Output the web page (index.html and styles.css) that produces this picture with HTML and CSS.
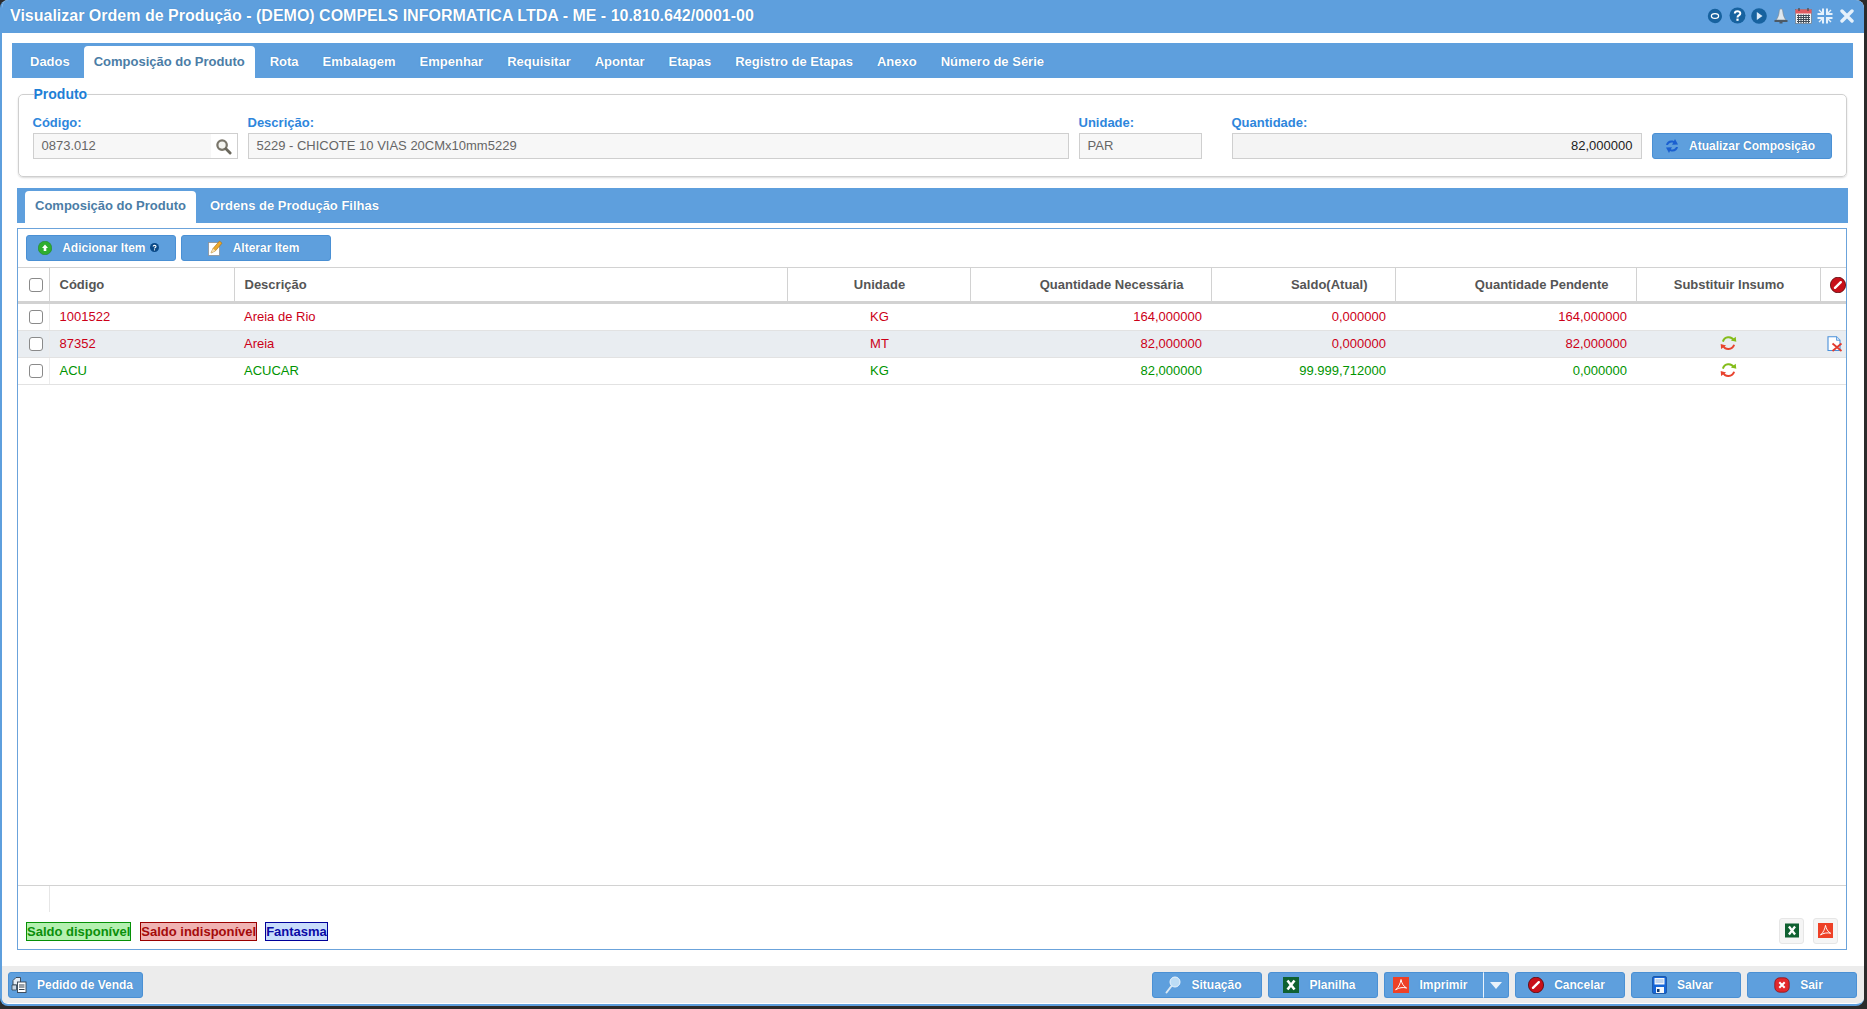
FILE: index.html
```html
<!DOCTYPE html>
<html lang="pt-BR">
<head>
<meta charset="utf-8">
<title>Visualizar Ordem de Produção</title>
<link rel="stylesheet" href="styles.css">
</head>
<body>
<svg class="defs" width="0" height="0" aria-hidden="true">
  <symbol id="i-excel" viewBox="0 0 16 16"><rect width="16" height="16" fill="#0f6131"/><path d="M4.5 3.5 11.5 12.5M11.5 3.5 4.5 12.5" stroke="#fff" stroke-width="2.6" fill="none"/></symbol>
  <symbol id="i-pdf" viewBox="0 0 16 16"><rect width="16" height="16" fill="#ee4127"/><path d="M8 2.5C7.4 6 6 10 2.6 12.8 6 10.6 10 10 13.6 11 10.5 9.5 8.6 6 8 2.5Z" fill="none" stroke="#fff" stroke-width="1"/></symbol>
  <symbol id="i-cancel" viewBox="0 0 16 16"><ellipse cx="8" cy="8" rx="7.6" ry="7.8" fill="#c8101a" stroke="#57060a" stroke-width=".8"/><path d="M5 10.8 10.8 5.2" stroke="#fff" stroke-width="2.4" stroke-linecap="round"/></symbol>
  <symbol id="i-swap" viewBox="0 0 16 16"><path d="M2.4 6.6A6 6 0 0 1 13.4 5.4" fill="none" stroke="#84bd1a" stroke-width="2"/><path d="M10.4 5.6 15.8 6.8 15.2 1.800Z" fill="#84bd1a"/><path d="M13.6 9.8A6 6 0 0 1 2.4 10.4" fill="none" stroke="#e8432e" stroke-width="2"/><path d="M.2 9 .6 14 5.6 10.6Z" fill="#e8432e"/></symbol>
</svg>
<div class="window">
  <header class="titlebar">
    <h1 class="title">Visualizar Ordem de Produção - (DEMO) COMPELS INFORMATICA LTDA - ME - 10.810.642/0001-00</h1>
    <div class="tools">
      <span class="tool"><svg width="16" height="16" viewBox="0 0 16 16"><path d="M8 .8A7.2 7.2 0 0 1 15 8C15 12 12 15.200 8 15.200A7.200 7.200 0 0 1 8 .8Z" fill="#17629f"/><ellipse cx="8" cy="8" rx="3.600" ry="2.400" fill="none" stroke="#fff" stroke-width="1.300"/></svg></span>
      <span class="tool"><svg width="17" height="17" viewBox="0 0 17 17"><circle cx="8.500" cy="8.500" r="8" fill="#17629f"/><path d="M5.800 6.600C5.800 3.500 11.300 3.500 11.300 6.500 11.300 8.500 8.500 8.400 8.500 10.400" fill="none" stroke="#fff" stroke-width="2"/><rect x="7.400" y="11.600" width="2.200" height="2.200" fill="#fff"/></svg></span>
      <span class="tool"><svg width="16" height="16" viewBox="0 0 16 16"><circle cx="8" cy="8" r="7.800" fill="#17629f"/><path d="M5.800 4 11.500 8 5.800 12Z" fill="#dcebf8"/></svg></span>
      <span class="tool"><svg width="14" height="16" viewBox="0 0 14 16"><path d="M7 .8C5.600.8 5.400 2 5.200 3.500 4.800 7 3.800 10 2 12H12C10.200 10 9.200 7 8.800 3.500 8.600 2 8.400.8 7 .8Z" fill="#dfe8ef" stroke="#7d8a94" stroke-width=".7"/><rect x=".5" y="12" width="13" height="2" fill="#4d5a66"/><rect x="5.500" y="14" width="3" height="1.500" fill="#4d5a66"/></svg></span>
      <span class="tool"><svg width="17" height="16" viewBox="0 0 17 16"><rect x=".5" y="1.500" width="16" height="14" fill="#f2f4f6" stroke="#5c6670" stroke-width=".6"/><rect x=".5" y="1.500" width="16" height="4" fill="#e05a5f"/><path d="M4 0V3M13 0V3" stroke="#444" stroke-width="1.200"/><path d="M2 7.500H15M2 9.500H15M2 11.500H15M2 13.500H15M3.500 6.500V15M6 6.500V15M8.500 6.500V15M11 6.500V15M13.500 6.500V15" stroke="#3f4a56" stroke-width="1"/></svg></span>
      <span class="tool"><svg width="16" height="16" viewBox="0 0 16 16" fill="none" stroke="#e6f1fb" stroke-width="2"><path d="M6 .5V6H.5M10 .5V6H15.500M6 15.500V10H.5M10 15.500V10H15.500"/><path d="M2 2 5.500 5.500M14 2 10.500 5.500M2 14 5.500 10.500M14 14 10.500 10.500" stroke-width="1.400"/></svg></span>
      <span class="tool"><svg width="14" height="14" viewBox="0 0 14 14"><path d="M2 2 12 12M12 2 2 12" stroke="#e6f1fb" stroke-width="3.400" stroke-linecap="round"/></svg></span>
    </div>
  </header>

  <nav class="tabs tabs-main">
    <a class="tab">Dados</a>
    <a class="tab tab-active">Composição do Produto</a>
    <a class="tab">Rota</a>
    <a class="tab">Embalagem</a>
    <a class="tab">Empenhar</a>
    <a class="tab">Requisitar</a>
    <a class="tab">Apontar</a>
    <a class="tab">Etapas</a>
    <a class="tab">Registro de Etapas</a>
    <a class="tab">Anexo</a>
    <a class="tab">Número de Série</a>
  </nav>

  <fieldset class="product">
    <legend class="product-legend">Produto</legend>
    <div class="fields">
      <div class="field f-code">
        <label class="field-label">Código:</label>
        <div class="input input-search"><span>0873.012</span>
          <span class="search-btn"><svg width="17" height="17" viewBox="0 0 18 18"><circle cx="7.500" cy="7.500" r="5" fill="#f4f4f0" stroke="#7a766b" stroke-width="2.400"/><path d="M11.500 11.500 16 16" stroke="#6a675c" stroke-width="3" stroke-linecap="round"/></svg></span>
        </div>
      </div>
      <div class="field f-desc">
        <label class="field-label">Descrição:</label>
        <div class="input">5229 - CHICOTE 10 VIAS 20CMx10mm5229</div>
      </div>
      <div class="field f-unit">
        <label class="field-label">Unidade:</label>
        <div class="input">PAR</div>
      </div>
      <div class="field f-qty">
        <label class="field-label">Quantidade:</label>
        <div class="input input-qty">82,000000</div>
      </div>
      <button class="btn btn-update">
        <svg width="14" height="16" viewBox="0 0 14 16"><path d="M1 7C1.500 3.500 5 1.500 9 3L10 1 13 6.500 7 6.800 8.200 4.800C6 4 3.800 5 3 7Z" fill="#1a5fd0"/><path d="M13 9C12.500 12.500 9 14.500 5 13L4 15 1 9.500 7 9.200 5.800 11.200C8 12 10.200 11 11 9Z" fill="#1a5fd0"/></svg>
        Atualizar Composição
      </button>
    </div>
  </fieldset>

  <nav class="tabs tabs-sub">
    <a class="tab tab-active tab-sub-active">Composição do Produto</a>
    <a class="tab">Ordens de Produção Filhas</a>
  </nav>

  <section class="box">
    <div class="toolbar">
      <button class="btn btn-tool">
        <svg width="14" height="14" viewBox="0 0 14 14"><circle cx="7" cy="7" r="6.800" fill="#2fae2f" stroke="#1d7f1d" stroke-width=".5"/><path d="M7 3.500 10 7H8.300V10H5.700V7H4Z" fill="#fff"/></svg>
        <span class="btn-help-wrap">Adicionar Item <svg class="help" width="9" height="9" viewBox="0 0 10 10"><circle cx="5" cy="5" r="5" fill="#0b4a88"/><path d="M3.500 4C3.500 2.200 6.700 2.200 6.700 4 6.700 5 5 5 5 6.200" fill="none" stroke="#fff" stroke-width="1.200"/><rect x="4.400" y="7" width="1.200" height="1.200" fill="#fff"/></svg></span>
      </button>
      <button class="btn btn-tool">
        <svg width="15" height="16" viewBox="0 0 15 16"><rect x=".5" y="2.500" width="11" height="13" fill="#fff" stroke="#8a8f96" stroke-width=".8"/><path d="M3 13 5 8.500 11.500 1 14 3.200 7.500 10.800Z" fill="#eda92b" stroke="#a06a10" stroke-width=".6"/><path d="M3 13 5 8.500 7.500 10.800Z" fill="#f6dfb0"/></svg>
        Alterar Item
      </button>
    </div>

    <div class="grid-wrap">
      <table class="grid">
        <colgroup>
          <col class="c-check"><col class="c-code"><col class="c-desc"><col class="c-unit"><col class="c-need"><col class="c-bal"><col class="c-pend"><col class="c-sub"><col class="c-act">
        </colgroup>
        <thead>
          <tr>
            <th class="ta-c"><span class="check"></span></th>
            <th>Código</th>
            <th>Descrição</th>
            <th class="ta-c">Unidade</th>
            <th class="ta-rh">Quantidade Necessária</th>
            <th class="ta-rh">Saldo(Atual)</th>
            <th class="ta-rh">Quantidade Pendente</th>
            <th class="ta-c">Substituir Insumo</th>
            <th class="th-icon"><svg class="ico" width="16" height="16"><use href="#i-cancel"/></svg></th>
          </tr>
        </thead>
        <tbody>
          <tr class="row-red row-first">
            <td class="ta-c cell-check"><span class="check"></span></td>
            <td>1001522</td><td>Areia de Rio</td><td class="ta-c">KG</td>
            <td class="ta-r">164,000000</td><td class="ta-r">0,000000</td><td class="ta-r">164,000000</td>
            <td></td><td></td>
          </tr>
          <tr class="row-red row-alt">
            <td class="ta-c cell-check"><span class="check"></span></td>
            <td>87352</td><td>Areia</td><td class="ta-c">MT</td>
            <td class="ta-r">82,000000</td><td class="ta-r">0,000000</td><td class="ta-r">82,000000</td>
            <td class="ta-c"><svg class="ico ico-swap" width="17" height="16"><use href="#i-swap"/></svg></td>
            <td class="cell-act"><svg class="ico" width="16" height="16" viewBox="0 0 16 16"><path d="M1 .8H9.500L13 4.300V14.500H1Z" fill="#fff" stroke="#4a90d9" stroke-width="1.100"/><path d="M9.500 .8V4.300H13" fill="#cfe3f7" stroke="#4a90d9" stroke-width=".8"/><path d="M5.500 7.500 14.500 15M14.500 7.500 5.500 15" stroke="#e23a2e" stroke-width="1.800"/></svg></td>
          </tr>
          <tr class="row-green">
            <td class="ta-c cell-check"><span class="check"></span></td>
            <td>ACU</td><td>ACUCAR</td><td class="ta-c">KG</td>
            <td class="ta-r">82,000000</td><td class="ta-r">99.999,712000</td><td class="ta-r">0,000000</td>
            <td class="ta-c"><svg class="ico ico-swap" width="17" height="16"><use href="#i-swap"/></svg></td><td></td>
          </tr>
        </tbody>
      </table>
    </div>

    <div class="grid-foot"><span class="grid-foot-cell"></span></div>

    <div class="legend-row">
      <span class="chip chip-green">Saldo disponível</span>
      <span class="chip chip-red">Saldo indisponível</span>
      <span class="chip chip-blue">Fantasma</span>
      <span class="exports">
        <span class="export"><svg width="14" height="15"><use href="#i-excel"/></svg></span>
        <span class="export"><svg width="15" height="15"><use href="#i-pdf"/></svg></span>
      </span>
    </div>
  </section>

  <footer class="actions">
    <button class="btn btn-order">
      <svg width="16" height="16" viewBox="0 0 16 16"><path d="M5 .5H9.500V8H2V3.500Z" fill="#e6edf5" stroke="#33414f" stroke-width=".9"/><rect x="6.500" y="5" width="8.500" height="10.500" fill="#fff" stroke="#33414f" stroke-width=".9"/><path d="M8 8H13.500M8 10H13.500M8 12.500H13.500" stroke="#33414f"/><path d="M1 8H5.500V13H1Z" fill="#c9d6e3" stroke="#33414f" stroke-width=".8"/></svg>
      Pedido de Venda
    </button>
    <div class="actions-right">
      <button class="btn btn-action">
        <svg width="16" height="18" viewBox="0 0 16 18"><circle cx="10" cy="6" r="5" fill="#bcdcf5" stroke="#e9f4fd" stroke-width="1"/><path d="M6.500 10 1.500 16.500" stroke="#dbe9f4" stroke-width="2" stroke-linecap="round"/></svg>
        Situação
      </button>
      <button class="btn btn-action"><svg width="16" height="16"><use href="#i-excel"/></svg> Planilha</button>
      <div class="split">
        <button class="btn btn-split-main"><svg width="16" height="16"><use href="#i-pdf"/></svg> Imprimir</button>
        <button class="btn btn-split-caret"><svg width="12" height="7" viewBox="0 0 12 7"><path d="M0 0H12L6 7Z" fill="#eaf3fb"/></svg></button>
      </div>
      <button class="btn btn-action"><svg width="16" height="16"><use href="#i-cancel"/></svg> Cancelar</button>
      <button class="btn btn-action">
        <svg width="15" height="18" viewBox="0 0 15 18"><rect x=".5" y=".5" width="14" height="17" rx="1.500" fill="#1565d8" stroke="#0d3f8c" stroke-width=".6"/><rect x="2.500" y="2" width="10" height="6.500" fill="#f4f7fb"/><path d="M3.500 4H11.500M3.500 6H11.500" stroke="#8fb2e0"/><rect x="4" y="11" width="8" height="6" fill="#f4f7fb"/><rect x="5" y="13" width="2.500" height="3" fill="#123a70"/></svg>
        Salvar
      </button>
      <button class="btn btn-action">
        <svg width="16" height="16" viewBox="0 0 16 16"><rect x=".8" y=".8" width="14.400" height="14.400" rx="5" fill="#e2282c" stroke="#8c1216" stroke-width=".8"/><path d="M5.300 5.300 10.700 10.700M10.700 5.300 5.300 10.700" stroke="#fff" stroke-width="2"/></svg>
        Sair
      </button>
    </div>
  </footer>
</div>
</body>
</html>
```
FILE: styles.css
```css
* { box-sizing: border-box; }
html, body { height: 100%; }
body {
  margin: 0;
  background: #2b2b2b;
  font-family: "Liberation Sans", Arial, sans-serif;
  font-size: 13px;
  overflow: hidden;
}
.defs { display: block; height: 0; }
.window {
  width: 1864px;
  height: 1006px;
  background: #fff;
  border-left: 2px solid #5e9fdd;
  border-bottom: 2px solid #5e9fdd;
  border-radius: 8px;
  display: flex;
  flex-direction: column;
  overflow: hidden;
}
.titlebar {
  flex: none;
  height: 33px;
  margin-left: -2px;
  background: #5e9fdd;
  display: flex;
  align-items: center;
  justify-content: space-between;
  padding: 0 6px 2px 10px;
}
.title {
  margin: 0;
  color: #fff;
  font-size: 16px;
  font-weight: 700;
  text-shadow: 0 0 1px #2f74b5;
}
.tools { display: flex; }
.tool { width: 22px; display: flex; justify-content: center; align-items: center; height: 18px; }

.tabs {
  flex: none;
  height: 35px;
  background: #5e9fdd;
  display: flex;
  align-items: flex-end;
}
.tabs-main { margin: 10px 11px 0 10px; padding-left: 6px; }
.tabs-sub { margin: 11px 16px 0 15px; padding-left: 8px; }
.tab {
  height: 32px;
  line-height: 32px;
  padding: 0 12px;
  color: #fff;
  font-weight: 700;
  font-size: 13px;
  text-shadow: 0 0 1px #2f74b5;
  white-space: nowrap;
}
.tab-active {
  margin: 0 3px 0 2px;
  padding: 0 10px;
  background: #fff;
  color: #4b7da6;
  border-radius: 4px 4px 0 0;
  text-shadow: none;
}
.tab-sub-active { margin: 0 2px 0 0; }
.tabs-sub .tab { line-height: 30px; }

.product {
  flex: none;
  margin: 8px 17px 0 15.500px;
  height: 91px;
  min-width: 0;
  border: 1px solid #cfcfcf;
  border-radius: 5px;
  padding: 0 14px;
  box-shadow: 0 1px 2px rgba(0,0,0,.15);
}
.product-legend {
  padding: 0;
  margin-left: 1px;
  color: #1f7fd6;
  font-weight: 700;
  font-size: 14px;
  line-height: 16px;
}
.fields { display: flex; align-items: flex-end; margin-top: 13px; }
.field { display: flex; flex-direction: column; }
.f-code { width: 205px; margin-right: 10px; }
.f-desc { width: 821px; margin-right: 10px; }
.f-unit { width: 123px; margin-right: 30px; }
.f-qty { width: 410px; margin-right: 10px; }
.field-label {
  color: #2e86dc;
  font-weight: 700;
  font-size: 13px;
  line-height: 15px;
  margin-bottom: 3px;
}
.input {
  height: 26px;
  line-height: 24px;
  border: 1px solid #cfcfcf;
  background: #f7f7f7;
  color: #666;
  font-size: 13px;
  padding: 0 8px;
}
.input-search { display: flex; justify-content: space-between; padding-right: 0; }
.search-btn { width: 26px; background: #fff; display: flex; align-items: center; justify-content: center; }
.input-qty { text-align: right; color: #222; background: #f4f4f4; }

.btn {
  font-family: inherit;
  font-weight: 700;
  font-size: 12px;
  color: #fff;
  background: #5e9fdd;
  border: 1px solid #4a90d4;
  border-radius: 3px;
  height: 26px;
  padding: 0;
  display: flex;
  align-items: center;
  justify-content: center;
  gap: 10px;
  text-shadow: 0 0 1px #2f74b5;
  white-space: nowrap;
}
.btn-update { width: 180px; padding-right: 3px; }
.box {
  flex: 1;
  min-height: 0;
  margin: 5px 17px 16px 15px;
  border: 1px solid #6ba3db;
  display: flex;
  flex-direction: column;
}
.toolbar { flex: none; display: flex; gap: 5px; padding: 6px 8px; }
.btn-tool { width: 150px; padding-right: 5px; }
.btn-help-wrap { display: inline-flex; align-items: center; gap: 0; white-space: pre; }
.help { margin-left: 1px; margin-bottom: 2px; }

.grid-wrap { flex: 1; min-height: 0; }
.grid {
  width: 1828px;
  table-layout: fixed;
  border-collapse: collapse;
  font-size: 13px;
}
.c-check { width: 31px; }
.c-code { width: 185px; }
.c-desc { width: 553px; }
.c-unit { width: 183px; }
.c-need { width: 241px; }
.c-bal { width: 184px; }
.c-pend { width: 241px; }
.c-sub { width: 184px; }
.c-act { width: 26px; }
.grid th {
  height: 35px;
  padding: 0 10px;
  font-weight: 700;
  color: #555;
  text-align: left;
  border-top: 1px solid #d2d2d2;
  border-right: 1px solid #d2d2d2;
  border-bottom: 3px solid #d2d2d2;
}
.grid td {
  height: 27px;
  padding: 0 10px 1px;
  border-bottom: 1px solid #e2e2e2;
}
.grid th.ta-c { text-align: center; padding: 0 0 0 2px; }
.grid td.ta-c { text-align: center; padding: 0 0 1px 2px; }
.grid th.ta-rh { text-align: right; padding-right: 27px; }
.grid td.ta-r { text-align: right; padding-right: 9px; }
.grid th:first-child { padding: 0 0 0 5px; }
.grid td:first-child { padding: 0 0 1px 5px; }
.grid th.th-icon { padding: 0; text-align: right; border-right: 0; }
.cell-check { border-right: 1px solid #ececec; }
.grid td.cell-act { padding: 0 3px 1px 0; text-align: right; }
.row-first td { height: 28px; }
.row-red td { color: #cc0018; }
.row-green td { color: #009400; }
.row-alt td { background: #e9edf1; }
.check {
  display: inline-block;
  width: 14px;
  height: 14px;
  background: #fff;
  border: 1px solid #8a8a8a;
  border-radius: 3px;
  vertical-align: middle;
}
.ico { vertical-align: middle; }
.ico-swap { margin: 0 2px 2px 0; }

.grid-foot { flex: none; height: 27px; border-top: 1px solid #d2d2d2; display: flex; }
.grid-foot-cell { width: 32px; border-right: 1px solid #e6e6e6; }
.legend-row { flex: none; height: 37px; display: flex; align-items: center; padding: 0 8px; gap: 9px; }
.chip {
  height: 19px;
  line-height: 17px;
  padding: 0;
  margin-top: 2px;
  font-size: 13px;
  font-weight: 700;
  border: 1px solid;
}
.chip-green { color: #0a8f0a; background: #b4f0b0; border-color: #069106; }
.chip-red { color: #a50a0a; background: #f0b2b2; border-color: #9a0000; }
.chip-blue { color: #0a0aa5; background: #c8dcfb; border-color: #00009a; margin-left: -1px; }
.exports { margin-left: auto; display: flex; gap: 9px; }
.export {
  width: 25px;
  height: 26px;
  background: #f5f5f5;
  border: 1px solid #e6e6e6;
  border-radius: 3px;
  display: flex;
  align-items: center;
  justify-content: center;
}

.actions {
  flex: none;
  height: 37px;
  margin-bottom: 1px;
  background: #ececec;
  display: flex;
  justify-content: space-between;
  padding: 6px 7px 0 6px;
}
.btn-order { width: 135px; padding-right: 7px; }
.actions-right { display: flex; gap: 6px; }
.btn-action { width: 110px; padding-right: 7px; }
.split { display: flex; width: 125px; }
.btn-split-main { width: 100px; border-radius: 3px 0 0 3px; border-right: 1px solid #eaf3fb; padding-right: 7px; }
.btn-split-caret { width: 25px; border-left: 0; border-radius: 0 3px 3px 0; }
```
